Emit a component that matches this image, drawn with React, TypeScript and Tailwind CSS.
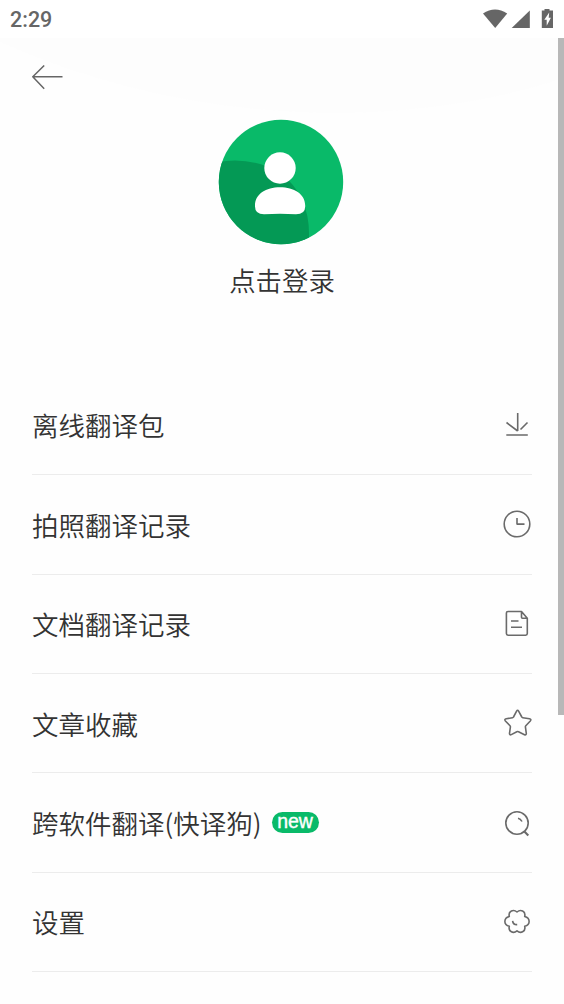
import type { ReactNode } from "react";

interface MenuItem {
  label: string;
  icon: ReactNode;
  isNew?: boolean;
}

const ITEMS: MenuItem[] = [
  {
    label: "离线翻译包",
    icon: <path d="M15.7 3v18M4.5 12.5 15.7 21M18.5 19.5l7-7M4.3 25h21.5" />,
  },
  {
    label: "拍照翻译记录",
    icon: (
      <>
        <circle cx="15" cy="15" r="12.8" />
        <path d="M15 9v6.1h7.5" />
      </>
    ),
  },
  {
    label: "文档翻译记录",
    icon: (
      <path d="M6 2.5h13.5l5.8 6.8v15.3q0 1.6-1.6 1.6H6q-1.6 0-1.6-1.6V4.1q0-1.6 1.6-1.6zM19.5 3v5.3q0 1 1 1h4.5M9 12h7.5M9 18.2h11" />
    ),
  },
  {
    label: "文章收藏",
    icon: (
      <path d="M14.6 3.2q1-1.8 2 0l3.2 5.8q.3.6 1 .7l6.7 1.1q2.2.5.8 2.2l-4.5 4.7q-.5.5-.4 1.2l.9 6.5q.1 2-1.8 1.3l-6-3q-.9-.4-1.7 0l-5.5 2.9q-1.9.8-1.8-1.2l.9-6.4q.1-.8-.4-1.3L3.4 13q-1.4-1.7.8-2.2l6.3-1.1q.7-.1 1-.7z" />
    ),
  },
  {
    label: "跨软件翻译(快译狗)",
    isNew: true,
    icon: (
      <>
        <circle cx="15" cy="15" r="11.2" />
        <path d="M16 10.2q2.6.4 4 3.3" />
        <path d="m22.4 23.4 3.9 4" strokeWidth="2.1" />
      </>
    ),
  },
  {
    label: "设置",
    icon: (
      <>
        <path d="M15 5C18.5 1.9 24 3.9 22.7 9.5C28.6 11.1 28.6 17.7 22.7 19.3C24 24.9 18.5 26.9 15 23.8C11.5 26.9 6 24.9 7.3 19.3C1.4 17.7 1.4 11.1 7.3 9.5C6 3.9 11.5 1.9 15 5z" />
        <path d="M10.6 13.8q.4 4 4.6 3.8" />
      </>
    ),
  },
];

function StatusBar() {
  return (
    <div className="flex h-[38px] items-center justify-between bg-white px-[10px] pt-px text-[#666]">
      <span className="font-[Roboto,sans-serif] text-[21.5px] font-medium leading-none">
        2:29
      </span>
      <svg width="72" height="22" viewBox="0 0 72 22" fill="currentColor">
        <path d="M1 4.5Q13-3.5 25.2 4.5L13.2 19z" />
        <path d="M47.8 1.500V19H29.700z" />
        <path d="M62.500 0h5v1.500h3.500V19H59.800V1.500h2.700z" />
        <path d="M67.200 3.500 62.300 10.800h2.400v6l4.200-8h-2.200z" fill="#fff" />
      </svg>
    </div>
  );
}

function Avatar() {
  return (
    <svg className="mr-[2.5px]" width="126" height="126" viewBox="0 0 126 126">
      <defs>
        <clipPath id="avatar">
          <circle cx="63" cy="63" r="62.2" />
        </clipPath>
      </defs>
      <g clipPath="url(#avatar)">
        <path fill="#09ba69" d="M0 0h126v126H0z" />
        <path fill="#049955" d="M0 43Q34 37 63 54.5 92 77 91 118v8H0z" />
      </g>
      <circle cx="62" cy="49" r="15.7" fill="#fff" />
      <path
        fill="#fff"
        d="M37 86.5C37 75 48 68.2 62 68.2s25.2 6.8 25.2 18.3v1q0 7.8-9.2 7.8-16-1-32 0-9 0-9-7.8z"
      />
    </svg>
  );
}

function MenuRow({ label, icon, isNew }: MenuItem) {
  return (
    <li className="flex h-[99.4px] items-center justify-between border-b border-[#ececec]">
      <div className="flex items-center">
        <span className="pt-px text-[26.5px] font-[350] leading-none text-[#333]">{label}</span>
        {isNew && (
          <span className="ml-[10px] flex h-[21px] w-[47px] items-center justify-center rounded-full bg-[#09ba69] pb-[2px] font-['Liberation_Sans',sans-serif] text-[19.5px] leading-none text-white [-webkit-text-stroke:0.4px_white]">
            new
          </span>
        )}
      </div>
      <svg
        width="30"
        height="30"
        viewBox="0 0 30 30"
        fill="none"
        stroke="#6a6a6a"
        strokeWidth="1.6"
        strokeLinejoin="round"
      >
        {icon}
      </svg>
    </li>
  );
}

export default function App() {
  return (
    <div className="h-[1004px] w-[564px] overflow-hidden bg-[#fefefe] font-['Noto_Sans_CJK_SC',sans-serif]">
      <StatusBar />
      <div className="relative h-[966px]">
        <svg className="absolute left-0 top-0" width="564" height="76" viewBox="0 0 564 76">
          <path d="M0 4Q160 75 340 75 465 73 564 40V0H0z" fill="#fdfdfd" />
        </svg>
        <div className="absolute right-0 top-0 h-[677px] w-[6px] bg-[#b8b8b8]" />

        <div className="relative flex flex-col px-8">
          <div className="flex h-[81px] items-center">
            <svg className="-mt-px" width="32" height="26" viewBox="0 0 32 26" fill="none" stroke="#666" strokeWidth="1.5">
              <path d="M30.5 11.8H1M12.2.5.8 11.8l11.4 12" />
            </svg>
          </div>
          <div className="flex flex-col items-center">
            <Avatar />
            <span className="mt-[22px] text-[26.4px] font-[350] leading-none text-[#333]">点击登录</span>
          </div>
          <ul className="mt-[82.5px]">
            {ITEMS.map((item) => (
              <MenuRow key={item.label} {...item} />
            ))}
          </ul>
        </div>
      </div>
    </div>
  );
}
